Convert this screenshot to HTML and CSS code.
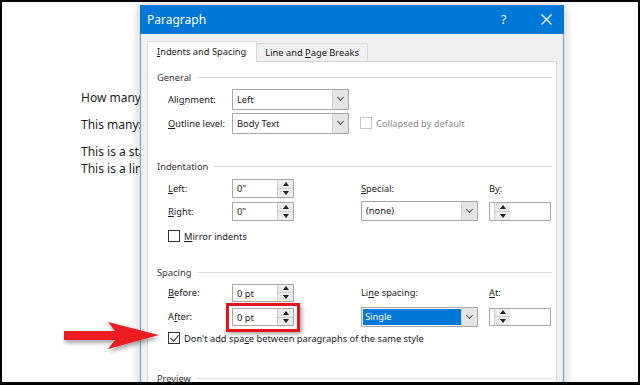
FILE: index.html
```html
<!DOCTYPE html>
<html>
<head>
<meta charset="utf-8">
<title>Paragraph</title>
<link rel="stylesheet" href="styles.css">
</head>
<body>
<div class="screen">
    <div class="doc">
        <p>How many spaces do you see?</p>
        <p>This many: one paragraph mark</p>
        <p>This is a standard paragraph of text.<br>This is a line with no extra space.</p>
    </div>

    <div class="dialog">
        <div class="titlebar">
            <span class="title">Paragraph</span>
            <span class="help">?</span>
            <svg class="close" width="11" height="11" viewBox="0 0 11 11"><path d="M0.5 0.5L10.5 10.5M10.5 0.5L0.5 10.5" stroke="#fff" stroke-width="1.2"/></svg>
        </div>
        <div class="tabs">
            <span class="tab active"><u>I</u>ndents and Spacing</span>
            <span class="tab">Line and <u>P</u>age Breaks</span>
        </div>
        <div class="panel">
            <div class="group-title">General</div>
            <div class="grid general">
                <label>Ali<u>g</u>nment:</label>
                <div class="select">Left</div>
                <label class="c1"><u>O</u>utline level:</label>
                <div class="select">Body Text</div>
                <div class="check disabled wide"><i></i><span>Collapsed by default</span></div>
            </div>

            <div class="group-title">Indentation</div>
            <div class="grid indent">
                <label><u>L</u>eft:</label>
                <div class="spin">0"<span class="btns"><i class="up"></i><i class="down"></i></span></div>
                <label class="c4"><u>S</u>pecial:</label>
                <label class="c6">B<u>y</u>:</label>
                <label class="c1"><u>R</u>ight:</label>
                <div class="spin">0"<span class="btns"><i class="up"></i><i class="down"></i></span></div>
                <div class="select c4">(none)</div>
                <div class="spin c6"><span class="btns"><i class="up"></i><i class="down"></i></span></div>
            </div>
            <div class="check"><i></i><span><u>M</u>irror indents</span></div>

            <div class="group-title spacing">Spacing</div>
            <div class="grid space">
                <label><u>B</u>efore:</label>
                <div class="spin">0 pt<span class="btns"><i class="up"></i><i class="down"></i></span></div>
                <label class="c4">Li<u>n</u>e spacing:</label>
                <label class="c6"><u>A</u>t:</label>
                <label class="c1">A<u>f</u>ter:</label>
                <div class="highlight"><div class="spin">0 pt<span class="btns"><i class="up"></i><i class="down"></i></span></div></div>
                <div class="select selected c4"><span>Single</span></div>
                <div class="spin c6"><span class="btns"><i class="up"></i><i class="down"></i></span></div>
            </div>
            <div class="check checked"><i></i><span>Don't add spa<u>c</u>e between paragraphs of the same style</span></div>

            <div class="group-title preview">Preview</div>
        </div>
    </div>

    <svg class="arrow" width="110" height="40" viewBox="60 318 110 40">
        <defs>
            <filter id="shade" x="-10%" y="-30%" width="130%" height="180%">
                <feDropShadow dx="1" dy="3" stdDeviation="2" flood-color="#000" flood-opacity="0.35"/>
            </filter>
        </defs>
        <polygon points="64,331 115,331 108,322 159,335 108,349 115,340 64,340" fill="#ec1c24" filter="url(#shade)"/>
    </svg>
</div>
</body>
</html>
```

FILE: styles.css
```css
* {
    margin: 0;
    padding: 0;
    box-sizing: border-box;
}

body {
    background: #000;
    font-family: "Noto Sans", "Open Sans", sans-serif;
}

.screen {
    position: relative;
    width: 640px;
    height: 385px;
    border: 2px solid #000;
    border-bottom-width: 3px;
    background: #fff;
    overflow: hidden;
}

.doc {
    padding: 87px 0 0 79px;
    font-size: 12px;
    color: #1e1e1e;
    white-space: nowrap;
}

.doc p {
    line-height: 17px;
    margin-bottom: 10px;
}

.dialog {
    position: absolute;
    left: 138px;
    top: 3px;
    width: 424px;
    height: 400px;
    background: #f0f0f0;
    border: 1px solid #6aa6e0;
    border-top: none;
    box-shadow: 0 0 10px rgba(0, 0, 0, 0.25);
    font-size: 9.3px;
    color: #1a1a1a;
    white-space: nowrap;
}

.titlebar {
    display: flex;
    align-items: center;
    height: 29px;
    margin: 0 -1px;
    padding-left: 7px;
    background: #0078d7;
    color: #fff;
}

.title {
    font-size: 12px;
    flex: 1;
}

.help {
    font-size: 12.5px;
    width: 40px;
}

.close {
    margin-right: 12px;
}

.tabs {
    display: flex;
    align-items: flex-end;
    height: 27px;
    padding-left: 6px;
}

.tab {
    height: 18px;
    line-height: 17px;
    padding: 0 8px;
    border: 1px solid #d9d9d9;
    border-left: none;
    border-bottom: none;
}

.tab.active {
    height: 21px;
    line-height: 20px;
    padding: 0 10px 0 9px;
    border-left: 1px solid #d9d9d9;
    background: #fff;
    position: relative;
    margin-bottom: -1px;
    z-index: 1;
}

.panel {
    margin: 0 6px;
    height: 340px;
    padding: 7px 4px 0 9px;
    background: #fff;
    border: 1px solid #d9d9d9;
}

.group-title {
    display: flex;
    align-items: center;
    gap: 6px;
    height: 16px;
    margin-top: 24px;
    color: #333;
}

.group-title:first-child {
    margin-top: 0;
}

.group-title::after {
    content: "";
    flex: 1;
    height: 1px;
    background: #dcdcdc;
}

.group-title.spacing {
    margin-top: 21px;
}

.group-title.preview {
    margin-top: 25px;
}

.grid {
    display: grid;
    grid-template-columns: 64px 117px 12px 117px 11px 62px;
    align-items: center;
    margin-left: 11px;
}

.general {
    grid-template-rows: 21px 22px;
    row-gap: 2px;
    margin-top: 4px;
}

.indent {
    grid-template-rows: 18px 20px;
    row-gap: 4px;
    margin-top: 5px;
}

.space {
    grid-template-rows: 17px 19px;
    row-gap: 6px;
    margin-top: 4px;
}

.c1 { grid-column: 1; }
.c4 { grid-column: 4; }
.c6 { grid-column: 6; }
.wide { grid-column: 4 / span 3; }

.select {
    position: relative;
    height: 21px;
    line-height: 19px;
    padding-left: 4px;
    border: 1px solid #a8a8a8;
    background: #fff;
    grid-column: 2;
}

.c4.select {
    grid-column: 4;
    height: 20px;
    line-height: 18px;
}

.select::before {
    content: "";
    position: absolute;
    top: 0;
    right: 0;
    bottom: 0;
    width: 15px;
    background: #e5e5e5;
    border-left: 1px solid #cfcfcf;
}

.select::after {
    content: "";
    position: absolute;
    right: 5px;
    top: 5px;
    width: 4px;
    height: 4px;
    border-right: 1px solid #555;
    border-bottom: 1px solid #555;
    transform: rotate(45deg);
}

.select.selected {
    padding: 1px 16px 1px 1px;
    line-height: 16px;
}

.select.selected span {
    display: block;
    padding-left: 2px;
    background: #0078d7;
    color: #fff;
}

.spin {
    display: flex;
    justify-content: space-between;
    width: 62px;
    height: 19px;
    line-height: 17px;
    padding-left: 4px;
    border: 1px solid #a8a8a8;
    background: #fff;
    grid-column: 2;
}

.c6.spin {
    grid-column: 6;
}

.space .spin {
    height: 18px;
}

.btns {
    display: flex;
    flex-direction: column;
    width: 16px;
    border-left: 1px solid #cfcfcf;
}

.btns i {
    flex: 1;
    display: flex;
    align-items: center;
    justify-content: center;
    background: #ececec;
}

.btns i + i {
    border-top: 1px solid #cfcfcf;
}

.btns .up::before {
    content: "";
    border: 3px solid transparent;
    border-top: none;
    border-bottom: 4px solid #222;
}

.btns .down::before {
    content: "";
    border: 3px solid transparent;
    border-bottom: none;
    border-top: 4px solid #222;
}

.highlight {
    grid-column: 2;
    justify-self: start;
    align-self: start;
    margin: -4px 0 0 -6px;
    padding: 2px 3px 3px 3px;
    border: 3px solid #e3141b;
    box-shadow: 2px 2px 4px rgba(0, 0, 0, 0.35);
}

.check {
    display: flex;
    align-items: center;
    gap: 4px;
    height: 14px;
    margin: 8px 0 0 11px;
}

.space + .check {
    margin-top: 5px;
}

.grid .check {
    margin: 0 0 0 -1px;
}

.check i {
    position: relative;
    width: 12px;
    height: 12px;
    border: 1px solid #333;
    background: #fff;
}

.check.disabled {
    color: #8c8c8c;
}

.check.disabled i {
    border-color: #c4c4c4;
}

.check.checked i::after {
    content: "";
    position: absolute;
    left: 3px;
    top: 0;
    width: 4px;
    height: 7px;
    border-right: 1px solid #222;
    border-bottom: 1px solid #222;
    transform: rotate(40deg);
}

.arrow {
    position: absolute;
    left: 58px;
    top: 316px;
}
```
